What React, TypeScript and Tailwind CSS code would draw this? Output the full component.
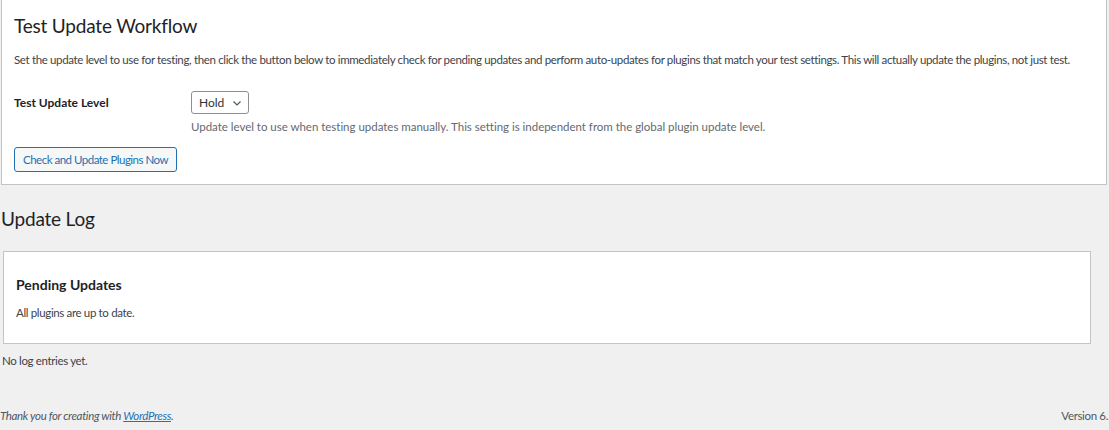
import React from 'react';

const body = "font-['Lato',sans-serif] text-[11.5px] tracking-[-0.35px]";
const heading = "font-['Lato',sans-serif] text-[19px] leading-[24px] tracking-[-0.2px] text-[#1d2327]";

export default function App() {
  return (
    <div className={`min-h-[430px] w-[1109px] overflow-hidden bg-[#f0f0f1] leading-[18px] text-[#3c434a] ${body}`}>
      <div className="ml-px w-[1106px] border border-t-0 border-[#c3c4c7] bg-white px-[12px] pb-3">
        <h2 className={`pt-[14px] ${heading}`}>Test Update Workflow</h2>
        <p className="mt-[13px] whitespace-nowrap">
          Set the update level to use for testing, then click the button below to immediately check for pending updates and
          perform auto-updates for plugins that match your test settings. This will actually update the plugins, not just test.
        </p>
        <div className="mt-[22px] flex items-center">
          <div className="w-[177px] text-[12px] font-bold tracking-normal text-[#1d2327]">Test Update Level</div>
          <div className="flex h-[23px] w-[58px] items-center justify-between rounded-[3px] border border-[#8c8f94] pl-[7px] pr-[6px] text-[12px] tracking-normal text-[#2c3338]">
            <span>Hold</span>
            <svg width="10" height="10" viewBox="0 0 10 10" fill="none" stroke="#50575e" strokeWidth="1.2">
              <path d="M1.5 3.5 5 7l3.5-3.5" />
            </svg>
          </div>
        </div>
        <p className="ml-[177px] mt-[4px] tracking-[-0.02px] text-[#646970]">
          Update level to use when testing updates manually. This setting is independent from the global plugin update level.
        </p>
        <button className="mt-[11px] flex h-[25px] items-center rounded-[3px] border border-[#2271b1] bg-[#f6f7f7] px-[8px] tracking-[-0.5px] text-[#2271b1]">
          Check and Update Plugins Now
        </button>
      </div>

      <h2 className={`ml-px mt-[22px] ${heading}`}>Update Log</h2>

      <div className="ml-[3px] mt-[20px] w-[1088px] border border-[#c3c4c7] bg-white px-[12px] pb-[21px] pt-[24px]">
        <h3 className="text-[14px] font-bold leading-[18px] tracking-normal text-[#1d2327]">Pending Updates</h3>
        <p className="mt-[10px]">All plugins are up to date.</p>
      </div>

      <p className="ml-[2px] mt-[8px]">No log entries yet.</p>

      <div className="mt-[37px] flex justify-between text-[#50575e]">
        <span className="italic">
          Thank you for creating with{' '}
          <a href="#" className="text-[#2271b1] underline">
            WordPress
          </a>
          .
        </span>
        <span className="pr-px">Version 6.</span>
      </div>
    </div>
  );
}
